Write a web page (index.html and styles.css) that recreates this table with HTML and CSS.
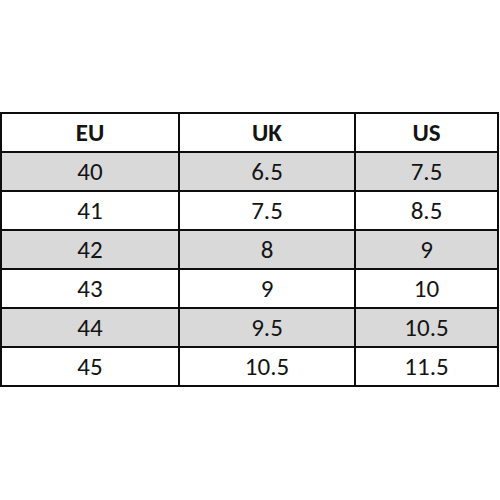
FILE: index.html
```html
<!DOCTYPE html>
<html>
<head>
<meta charset="utf-8">
<link rel="stylesheet" href="styles.css">
</head>
<body>
<div class="chart">
  <div class="cell head">EU</div><div class="cell head">UK</div><div class="cell head">US</div>
  <div class="cell alt">40</div><div class="cell alt">6.5</div><div class="cell alt">7.5</div>
  <div class="cell">41</div><div class="cell">7.5</div><div class="cell">8.5</div>
  <div class="cell alt">42</div><div class="cell alt">8</div><div class="cell alt">9</div>
  <div class="cell">43</div><div class="cell">9</div><div class="cell">10</div>
  <div class="cell alt">44</div><div class="cell alt">9.5</div><div class="cell alt">10.5</div>
  <div class="cell">45</div><div class="cell">10.5</div><div class="cell">11.5</div>
</div>
</body>
</html>
```

FILE: styles.css
```css
html, body {
  margin: 0;
  padding: 0;
  background: #ffffff;
}
body {
  padding-top: 112px;
  font-family: "Carlito", "Open Sans", "Noto Sans", sans-serif;
}
.chart {
  display: grid;
  grid-template-columns: 176px 174px 141px;
  grid-auto-rows: 37px;
  gap: 2px;
  padding: 2px;
  width: 495px;
  background: #0d0d0d;
}
.cell {
  background: #ffffff;
  color: #141414;
  font-size: 25px;
  line-height: 1;
  display: flex;
  align-items: center;
  justify-content: center;
}
.cell.alt {
  background: #d9d9d9;
}
.cell.head {
  font-weight: 700;
}
```
